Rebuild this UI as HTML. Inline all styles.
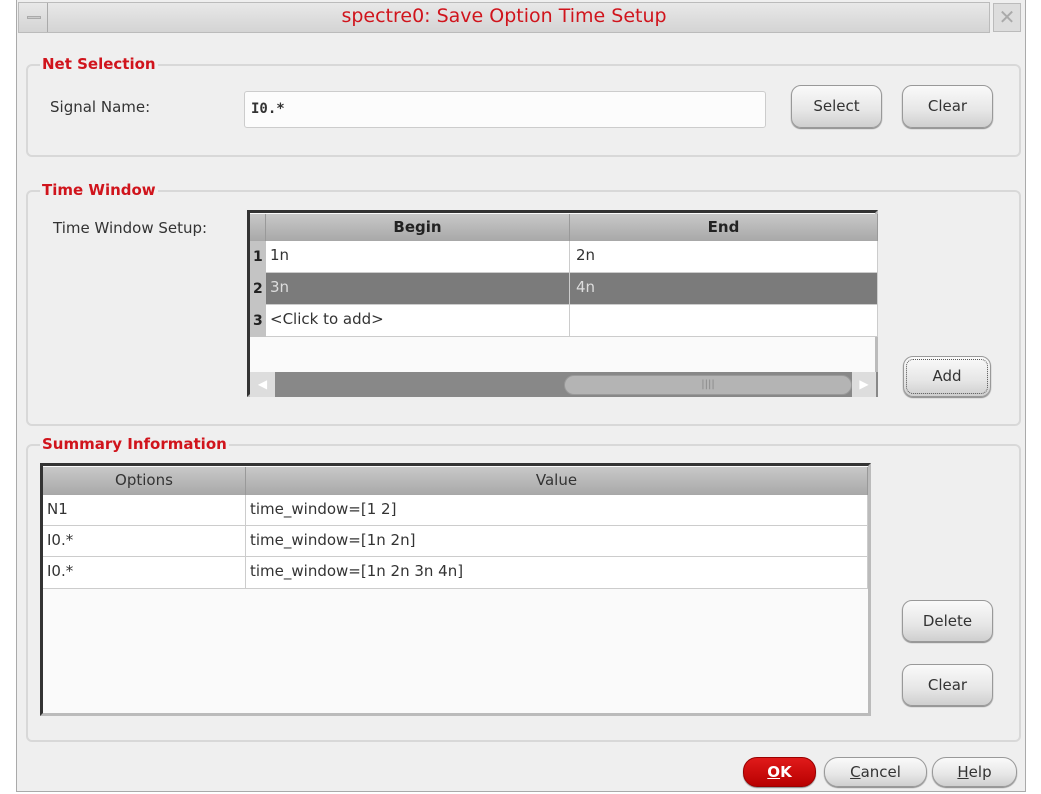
<!DOCTYPE html>
<html><head><meta charset="utf-8"><style>
*{box-sizing:border-box;margin:0;padding:0}
body{width:1041px;height:794px;background:#fff;position:relative;overflow:hidden;font-family:"DejaVu Sans","Liberation Sans",sans-serif;font-size:15px;color:#333}
.a{position:absolute}
.win{left:16px;top:0;width:1010px;height:792px;background:#efefef;border:1px solid #aaa;border-top:none}
.title{left:18px;top:2px;width:972px;height:31px;background:linear-gradient(#e8e8e8,#d4d4d4);border:1px solid #bbb}
.grp{border:2px solid #d8d8d8;border-radius:6px;background:#efefef}
.gl{color:#d0141c;font-weight:bold;font-size:15px;background:#efefef;padding:0 2px;line-height:18px}
.btn{border:1px solid #999;border-radius:10px;background:linear-gradient(#fafafa,#e6e6e6 60%,#cfcfcf);box-shadow:0 1px 1px #888;text-align:center;color:#333;font-size:15px}
.tbl{background:#fafafa;border:3px solid #333;border-right-color:#bbb;border-bottom-color:#bbb}
.hd{background:linear-gradient(#c8c8c8,#a8a8a8);font-weight:bold;color:#222;text-align:center;line-height:26px;border-right:1px solid #999}
.cell{border-bottom:1px solid #ccc;border-right:1px solid #ccc;padding-left:4px;background:#fff}
</style></head><body>
<div class="a win"></div>
<div class="a title"></div>
<div class="a" style="left:19px;top:3px;width:29px;height:29px;border-right:1px solid #aaa"><div class="a" style="left:8px;top:13px;width:14px;height:3px;background:#ccc;border:1px solid #aaa"></div></div>
<div class="a" style="left:993px;top:3px;width:28px;height:29px;background:#ddd;border:1px solid #bbb;color:#aaa;font-size:20px;text-align:center;line-height:27px">✕</div>
<div class="a" style="left:18px;top:2px;width:972px;line-height:29px;text-align:center;color:#d0141c;font-size:19px">spectre0: Save Option Time Setup</div>

<div class="a grp" style="left:26px;top:64px;width:995px;height:93px"></div>
<div class="a gl" style="left:40px;top:55px">Net Selection</div>
<div class="a" style="left:50px;top:98px">Signal Name:</div>
<div class="a" style="left:244px;top:91px;width:522px;height:37px;background:#fcfcfc;border:1px solid #ccc;border-radius:3px;font-family:'DejaVu Sans Mono','Liberation Mono',monospace;font-weight:bold;font-size:14px;padding:9px 6px">I0.*</div>
<div class="a btn" style="left:791px;top:85px;width:91px;height:43px;line-height:41px">Select</div>
<div class="a btn" style="left:902px;top:85px;width:91px;height:43px;line-height:41px">Clear</div>

<div class="a grp" style="left:26px;top:190px;width:995px;height:236px"></div>
<div class="a gl" style="left:40px;top:181px">Time Window</div>
<div class="a" style="left:53px;top:219px">Time Window Setup:</div>
<div class="a tbl" style="left:247px;top:210px;width:631px;height:187px">
 <div class="a hd" style="left:0;top:1px;width:16px;height:27px"></div>
 <div class="a hd" style="left:16px;top:1px;width:304px;height:27px">Begin</div>
 <div class="a hd" style="left:320px;top:1px;width:308px;height:27px">End</div>
 <div class="a" style="left:0;top:28px;width:16px;height:96px;background:#c4c4c4;font-weight:bold;font-size:14px;color:#222">
  <div class="a" style="left:3px;top:8px">1</div><div class="a" style="left:3px;top:40px">2</div><div class="a" style="left:3px;top:72px">3</div></div>
 <div class="a cell" style="left:16px;top:28px;width:304px;height:32px;line-height:28px">1n</div>
 <div class="a cell" style="left:320px;top:28px;width:308px;height:32px;line-height:28px;padding-left:6px">2n</div>
 <div class="a cell" style="left:16px;top:60px;width:304px;height:32px;line-height:28px;background:#7b7b7b;color:#ddd">3n</div>
 <div class="a cell" style="left:320px;top:60px;width:308px;height:32px;line-height:28px;padding-left:6px;background:#7b7b7b;color:#ddd">4n</div>
 <div class="a cell" style="left:16px;top:92px;width:304px;height:32px;line-height:28px">&lt;Click to add&gt;</div>
 <div class="a cell" style="left:320px;top:92px;width:308px;height:32px"></div>
 <div class="a" style="left:0;top:159px;width:628px;height:25px;background:#888"></div>
 <div class="a" style="left:0;top:159px;width:25px;height:25px;background:#ddd;color:#fff;font-size:12px;line-height:25px;text-align:center">◀</div>
 <div class="a" style="left:314px;top:162px;width:288px;height:20px;border-radius:10px;background:#b4b4b4;border:1px solid #999;text-align:center;color:#888;font-size:10px;line-height:18px">||||</div>
 <div class="a" style="left:602px;top:159px;width:24px;height:25px;background:#ddd;color:#fff;font-size:12px;line-height:25px;text-align:center">▶</div>
</div>
<div class="a btn" style="left:903px;top:356px;width:88px;height:41px;line-height:39px;outline:1px dotted #555;outline-offset:-4px">Add</div>

<div class="a grp" style="left:26px;top:444px;width:995px;height:298px"></div>
<div class="a gl" style="left:40px;top:435px">Summary Information</div>
<div class="a tbl" style="left:40px;top:463px;width:831px;height:253px">
 <div class="a hd" style="left:0;top:1px;width:203px;height:28px;font-weight:normal;color:#333">Options</div>
 <div class="a hd" style="left:203px;top:1px;width:622px;height:28px;font-weight:normal;color:#333">Value</div>
 <div class="a cell" style="left:0;top:29px;width:203px;height:31px;line-height:29px">N1</div>
 <div class="a cell" style="left:203px;top:29px;width:622px;height:31px;line-height:29px">time_window=[1 2]</div>
 <div class="a cell" style="left:0;top:60px;width:203px;height:31px;line-height:29px">I0.*</div>
 <div class="a cell" style="left:203px;top:60px;width:622px;height:31px;line-height:29px">time_window=[1n 2n]</div>
 <div class="a cell" style="left:0;top:91px;width:203px;height:32px;line-height:29px">I0.*</div>
 <div class="a cell" style="left:203px;top:91px;width:622px;height:32px;line-height:29px">time_window=[1n 2n 3n 4n]</div>
</div>
<div class="a btn" style="left:902px;top:600px;width:91px;height:42px;line-height:40px">Delete</div>
<div class="a btn" style="left:902px;top:664px;width:91px;height:42px;line-height:40px">Clear</div>

<div class="a btn" style="left:743px;top:757px;width:73px;height:30px;line-height:28px;background:linear-gradient(#e01a1a,#b80000);border-color:#900;color:#fff;font-weight:bold;border-radius:14px"><u>O</u>K</div>
<div class="a btn" style="left:824px;top:757px;width:103px;height:30px;line-height:28px;border-radius:14px"><u>C</u>ancel</div>
<div class="a btn" style="left:932px;top:757px;width:85px;height:30px;line-height:28px;border-radius:14px"><u>H</u>elp</div>
</body></html>
